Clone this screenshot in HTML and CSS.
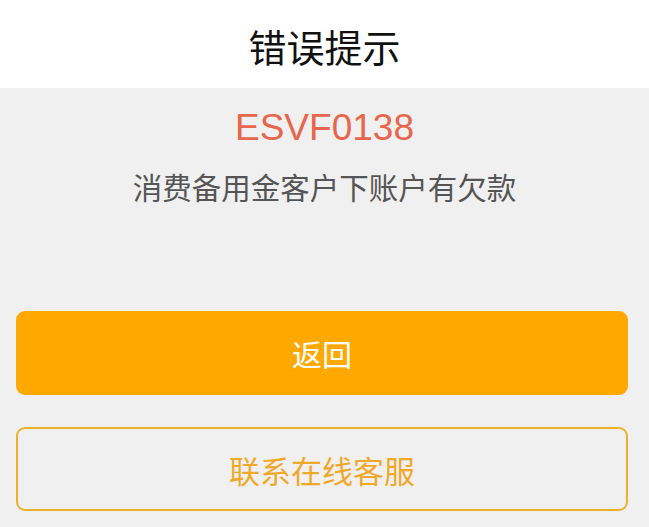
FILE: index.html
```html
<!DOCTYPE html>
<html lang="zh-CN">
<head>
<meta charset="UTF-8" />
<meta name="viewport" content="width=device-width, initial-scale=1.0" />
<title>错误提示</title>
<link rel="stylesheet" href="styles.css">
</head>
<body>

<!-- Шапка -->
<div class="header">
  <h1 class="title">错误提示</h1>
</div>

<!-- Сообщение об ошибке -->
<div class="message">
  <div class="code">ESVF0138</div>
  <div class="desc">消费备用金客户下账户有欠款</div>
</div>

<!-- Кнопки -->
<div class="actions">
  <button class="btn btn-primary">返回</button>
  <button class="btn btn-outline">联系在线客服</button>
</div>

</body>
</html>
```

FILE: styles.css
```css
/* Общие стили */
body {
  margin: 0;
  background: #f0f0f0;
  font-family: "Noto Sans CJK SC", "Noto Sans", sans-serif;
}

.header {
  height: 88px;
  background: #fff;
  display: flex;
  align-items: center;
  justify-content: center;
}
.title {
  margin: 0 0 -3px;
  font-size: 38px;
  font-weight: 400;
  color: #111;
  line-height: 1;
}

.message {
  padding-top: 20px;
  text-align: center;
}
.code {
  font-family: "Liberation Sans", Arial, sans-serif;
  font-size: 37px;
  line-height: 40px;
  color: #e7664c;
}
.desc {
  margin-top: 18px;
  font-size: 29.5px;
  line-height: 40px;
  color: #555;
}

/* Кнопки */
.actions {
  padding: 105px 21px 0 16px;
  display: flex;
  flex-direction: column;
  gap: 32px;
}
.btn {
  height: 84px;
  border-radius: 9px;
  font-family: "Noto Sans CJK SC", sans-serif;
  font-size: 30px;
  cursor: pointer;
}
.btn-primary {
  background: #ffa800;
  border: none;
  color: #fff;
}
.btn-outline {
  background: transparent;
  border: 2.5px solid #f0b02c;
  color: #f0a82a;
  font-size: 31px;
}
```
